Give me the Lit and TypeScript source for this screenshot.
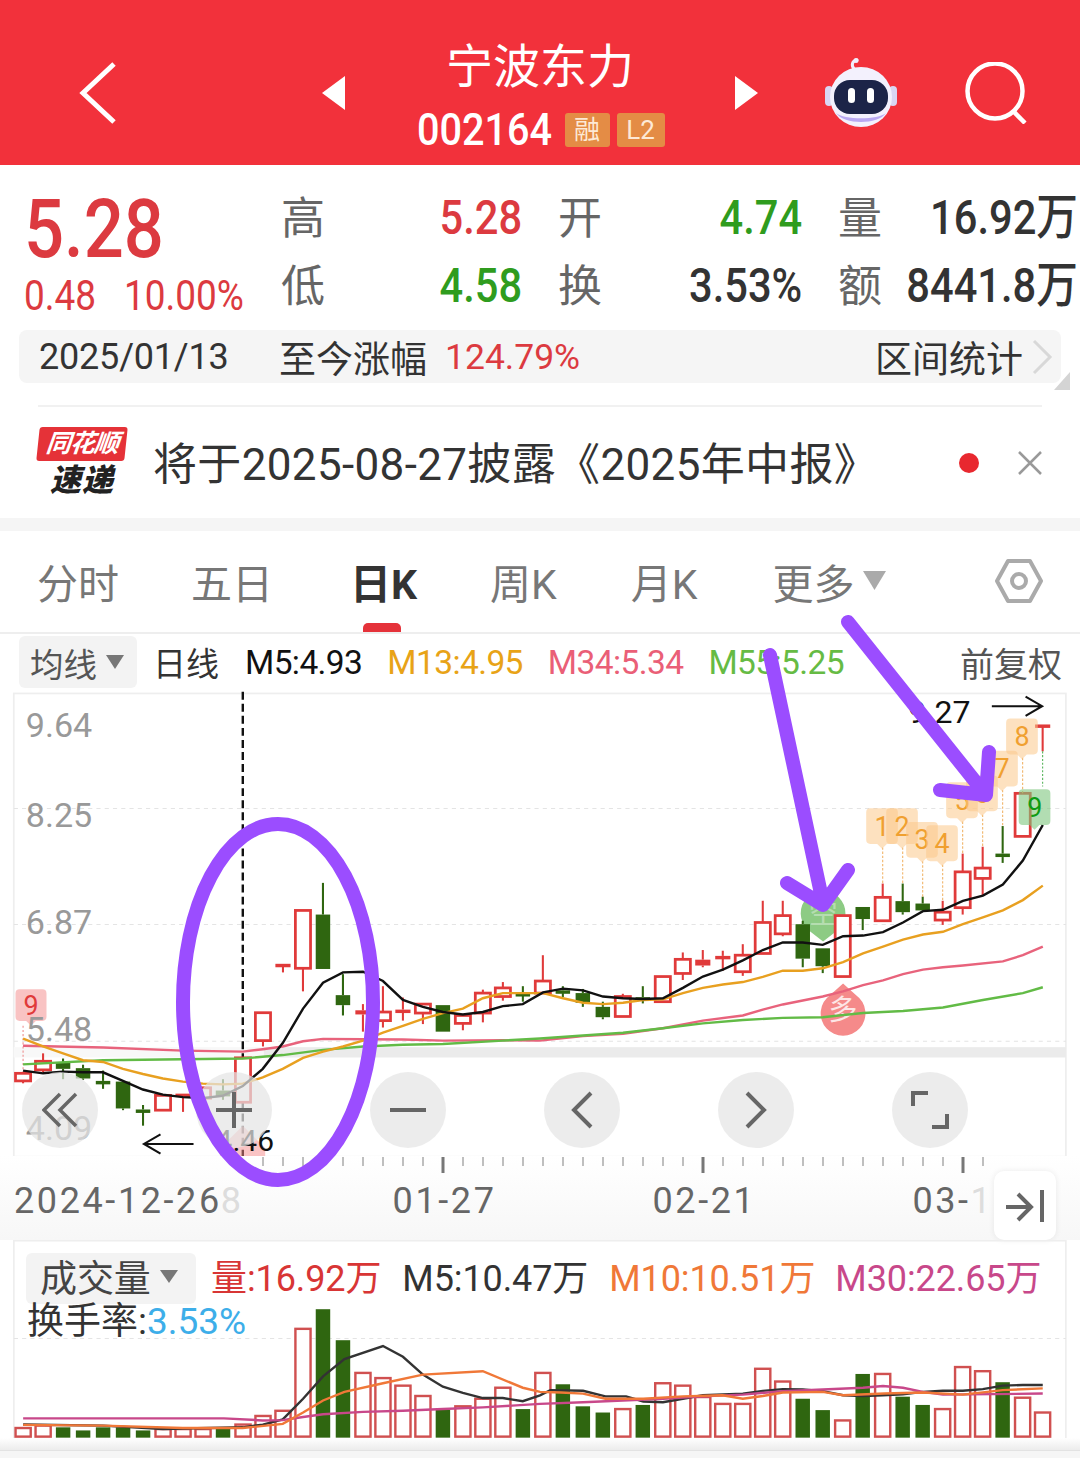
import { LitElement, css, html, svg } from 'lit'
import { customElement } from 'lit/decorators.js'

// chart data is traced off the screenshot: 1px = 2.904 units, x = 67 + 58.05 * i
const cx = (i: number) => 67 + 58.05 * i
const RED = '#e03a3a'
const GREEN = '#2f6610'

// kind, high, body top, body bottom, low
type Candle = [string, number, number, number, number]
const candles: Candle[] = [
  ['r', 1113, 1113, 1135, 1142], ['r', 1055, 1078, 1103, 1110], ['g', 1070, 1083, 1100, 1130], ['g', 1088, 1098, 1128, 1132],
  ['g', 1105, 1135, 1141, 1158], ['g', 1137, 1137, 1215, 1220], ['g', 1205, 1218, 1222, 1265], ['r', 1177, 1177, 1220, 1220],
  ['R', 1172, 1172, 1178, 1225], ['r', 1155, 1155, 1185, 1185], ['g', 1130, 1163, 1180, 1190], ['r', 1068, 1068, 1197, 1197],
  ['r', 937, 937, 1018, 1035], ['R', 795, 795, 800, 820], ['r', 640, 640, 808, 875], ['g', 560, 652, 810, 810],
  ['g', 825, 886, 915, 945], ['R', 912, 930, 942, 992], ['r', 860, 935, 960, 980], ['R', 893, 928, 934, 960],
  ['r', 912, 912, 938, 970], ['g', 915, 915, 992, 992], ['r', 945, 945, 968, 988], ['r', 870, 880, 938, 965],
  ['r', 848, 865, 890, 902], ['g', 860, 880, 884, 905], ['r', 770, 845, 880, 880], ['g', 860, 872, 880, 892],
  ['g', 868, 880, 908, 920], ['g', 905, 920, 950, 956], ['r', 882, 890, 948, 948], ['g', 860, 892, 898, 910],
  ['r', 832, 832, 905, 905], ['r', 762, 782, 823, 842], ['R', 755, 783, 800, 805], ['R', 757, 772, 777, 815],
  ['r', 738, 770, 818, 830], ['r', 612, 675, 765, 765], ['r', 612, 655, 708, 715], ['g', 670, 680, 780, 805],
  ['g', 750, 750, 802, 822], ['r', 655, 655, 832, 832], ['g', 630, 630, 665, 697], ['r', 562, 602, 670, 670],
  ['g', 562, 613, 645, 652], ['g', 600, 620, 640, 640], ['r', 612, 645, 668, 682], ['r', 475, 528, 632, 652],
  ['r', 455, 517, 547, 595], ['g', 395, 475, 485, 502], ['r', 300, 300, 425, 425], ['R', 100, 100, 105, 178],
]

const left = 1568
const pts = (head: number[][], tail: number[][]) =>
  [...head, ...tail.map(([x, y]) => [x + left, y])].map(p => p.join(',')).join(' ')

const ma5 = pts(
  [[67, 1105], [125, 1113], [183, 1108], [241, 1110], [299, 1110], [357, 1135], [415, 1160], [473, 1175], [531, 1182], [589, 1185], [647, 1178], [705, 1150], [763, 1100], [821, 1025], [880, 925], [938, 850], [996, 820], [1054, 818], [1112, 845], [1170, 900], [1228, 920], [1286, 935], [1344, 942], [1402, 935], [1460, 918], [1518, 912]],
  [[9, 878], [67, 867], [125, 872], [183, 890], [241, 895], [299, 897], [357, 895], [415, 865], [473, 832], [531, 812], [589, 785], [647, 755], [705, 733], [763, 733], [821, 740], [880, 715], [938, 713], [996, 703], [1054, 675], [1112, 642], [1170, 638], [1228, 612], [1286, 597], [1344, 565], [1402, 495], [1460, 392]],
)
const ma13 = pts(
  [[67, 1012], [125, 1035], [183, 1055], [241, 1075], [299, 1080], [357, 1100], [415, 1115], [473, 1128], [531, 1137], [589, 1143], [647, 1145], [705, 1143], [763, 1125], [821, 1100], [880, 1068], [938, 1050], [996, 1035], [1054, 1018], [1112, 995], [1170, 975], [1228, 955], [1286, 938], [1344, 925], [1402, 895], [1460, 880], [1518, 880]],
  [[9, 880], [67, 895], [125, 908], [183, 912], [241, 908], [299, 900], [357, 898], [415, 880], [473, 865], [531, 855], [589, 848], [647, 833], [705, 815], [763, 815], [821, 808], [880, 790], [938, 765], [996, 745], [1054, 725], [1112, 710], [1170, 702], [1228, 680], [1286, 660], [1344, 640], [1402, 610], [1460, 568]],
)
const ma34 = pts(
  [[67, 1033], [300, 1038], [531, 1047], [705, 1050], [763, 1043], [821, 1035], [880, 1020], [938, 1013], [1054, 1014], [1170, 1015], [1286, 1018], [1460, 1017]],
  [[0, 1018], [125, 1005], [241, 998], [357, 982], [473, 960], [589, 945], [647, 928], [705, 913], [821, 890], [880, 875], [938, 857], [996, 843], [1054, 825], [1112, 812], [1170, 805], [1228, 800], [1344, 788], [1402, 770], [1460, 745]],
)
const ma55 = pts(
  [[67, 1087], [299, 1075], [473, 1073], [705, 1070], [821, 1060], [938, 1045], [1054, 1035], [1170, 1030], [1286, 1028], [1460, 1018]],
  [[0, 1012], [125, 1003], [241, 995], [357, 982], [473, 968], [589, 958], [705, 952], [821, 950], [938, 938], [1054, 932], [1170, 922], [1286, 900], [1402, 880], [1460, 863]],
)

// top of each volume bar, baseline 603
const volTops = [575, 568, 573, 582, 573, 573, 582, 578, 578, 578, 575, 565, 540, 525, 287, 230, 320, 415, 430, 452, 482, 522, 512, 490, 458, 520, 415, 448, 512, 530, 520, 508, 445, 452, 485, 505, 505, 403, 440, 490, 523, 553, 418, 418, 484, 508, 520, 398, 410, 442, 487, 530]

const volBlack = pts(
  [[67, 565], [299, 568], [473, 578], [705, 573], [763, 565], [821, 550], [880, 490], [938, 425], [1000, 375], [1112, 337], [1170, 368], [1228, 420], [1286, 455], [1344, 473], [1402, 488], [1460, 488], [1518, 497]],
  [[0, 480], [30, 465], [125, 467], [190, 483], [250, 483], [300, 498], [357, 500], [415, 490], [473, 480], [589, 475], [647, 467], [705, 462], [763, 463], [821, 468], [880, 480], [938, 482], [996, 480], [1054, 477], [1112, 470], [1170, 467], [1228, 467], [1286, 462], [1344, 452], [1402, 450], [1460, 450]],
)
const volOrange = pts(
  [[67, 566], [299, 568], [531, 575], [705, 575], [821, 563], [880, 530], [938, 495], [1000, 470], [1112, 445], [1228, 420], [1402, 410], [1518, 458]],
  [[0, 470], [60, 472], [125, 475], [190, 490], [300, 490], [415, 483], [530, 480], [589, 490], [647, 482], [705, 472], [821, 470], [880, 480], [1000, 475], [1112, 472], [1228, 478], [1344, 465], [1460, 460]],
)
const volPink = pts(
  [[67, 547], [650, 547], [763, 553], [821, 552], [880, 543], [938, 535], [1054, 528], [1170, 525], [1286, 520], [1402, 515]],
  [[0, 505], [125, 500], [241, 495], [357, 490], [473, 483], [589, 478], [705, 468], [821, 463], [938, 458], [996, 453], [1054, 458], [1112, 470], [1170, 478], [1460, 475]],
)

// orange sequence flags: number, x, flag centre y, y the dashed line runs to
const flags: [string, number, number, number][] = [
  ['1', 43, 395, 562], ['2', 44, 395, 562], ['3', 45, 435, 600], ['4', 46, 445, 612],
  ['5', 47, 320, 475], ['6', 48, 300, 455], ['7', 49, 228, 395], ['8', 50, 135, 300],
]

const flagPath = (x: number, y: number, w = 92, h = 104) =>
  `M${x - w / 2 + 12} ${y - h / 2}h${w - 24}q12 0 12 12v${h - 24}q0 12 -12 12h${-(w / 2 - 26)}l-14 14l-14 -14h${-(w / 2 - 26)}q-12 0 -12 -12v${-(h - 24)}q0 -12 12 -12z`

const candleSvg = ([kind, high, top, bottom, low]: Candle, i: number) => {
  const x = cx(i)
  const c = kind === 'g' ? GREEN : RED
  const w = kind === 'g' ? 42 : 44
  return svg`
    <line x1=${x} x2=${x} y1=${high} y2=${top} stroke=${c} stroke-width="6" />
    <line x1=${x} x2=${x} y1=${bottom} y2=${low} stroke=${c} stroke-width="6" />
    ${kind === 'r'
      ? svg`<rect x=${x - w / 2} y=${top} width=${w} height=${bottom - top} fill="#fff" stroke=${c} stroke-width="8" />`
      : svg`<rect x=${x - w / 2} y=${top} width=${w} height=${Math.max(bottom - top, 10)} fill=${c} />`}`
}

const volBar = (top: number, i: number) => {
  const x = cx(i)
  const green = candles[i][0] === 'g'
  return green
    ? svg`<rect x=${x - 21} y=${top} width="42" height=${603 - top} fill=${GREEN} />`
    : svg`<rect x=${x - 22} y=${top} width="44" height=${600 - top} fill="#fff" stroke="#d05050" stroke-width="7" />`
}

@customElement('app-root')
export class AppRoot extends LitElement {
  static styles = css`
    :host {
      display: block;
      position: relative;
      width: 1080px;
      height: 1462px;
      overflow: hidden;
      background: #fff;
      font-family: Roboto, "Noto Sans CJK SC", sans-serif;
      color: #333;
    }
    svg { display: block; }
    .cond { display: inline-block; transform: scaleX(.86); transform-origin: left center; white-space: nowrap; }

    .head {
      height: 165px;
      box-sizing: border-box;
      padding-top: 20px;
      background: #f2313b;
      color: #fff;
      display: grid;
      grid-template-columns: 322px 23px 390px 23px 67px 72px 68px 62px;
      align-items: center;
    }
    .back { margin-left: 78px; }
    .title { text-align: center; }
    .name { font-size: 47px; line-height: 56px; margin-top: 4px; }
    .code { display: flex; justify-content: center; align-items: center; gap: 7px; height: 40px; margin-top: 15px; padding-left: 1px; }
    .num { font-size: 44px; font-weight: 500; width: 141px; text-align: left; }
    .num .cond { transform: scaleX(.9); }
    .tag { background: #e48c45; color: #fde9d6; font-size: 26px; height: 34px; line-height: 34px; text-align: center; border-radius: 3px; }
    .tag.a { width: 45px; }
    .tag.b { width: 48px; }

    .quote { height: 165px; display: flex; }
    .price { width: 283px; padding-left: 24px; box-sizing: border-box; color: #dc3a40; }
    .big { font-size: 82px; line-height: 80px; margin-top: 24px; font-weight: 500; }
    .chg { display: flex; gap: 30px; font-size: 42px; line-height: 44px; margin-top: 5px; width: 256px; }
    .chg span { width: 70px; }
    .chg .cond { transform: scaleX(.88); }
    .grid {
      display: grid;
      grid-template-columns: 42px 197px 80px 200px 80px 196px;
      grid-auto-rows: 68px;
      margin-top: 19px;
      align-items: center;
    }
    .lab { font-size: 44px; color: #666; justify-self: end; margin-top: -6px; }
    .val {
      font-size: 49px;
      line-height: 60px;
      font-weight: 500;
      justify-self: end;
      white-space: nowrap;
      transform: scaleX(.85);
      transform-origin: right center;
    }
    .up { color: #dc3a40; }
    .down { color: #2f9c1e; }

    .range {
      position: relative;
      height: 53px;
      margin: 0 19px;
      padding: 0 8px 0 20px;
      background: #f5f5f5;
      border-radius: 8px;
      display: flex;
      align-items: center;
      font-size: 36px;
    }
    .range .date { width: 240px; letter-spacing: -.2px; }
    .range .cn { font-size: 37px; }
    .range .pct { margin-left: 18px; font-size: 35.5px; }
    .range .stat { margin-left: auto; font-size: 37px; display: flex; align-items: center; gap: 9px; }
    .corner { position: absolute; right: -9px; bottom: -7px; }

    .news {
      margin: 22px 38px 0;
      height: 111px;
      border-top: 2px solid #f1f1f1;
      display: flex;
      align-items: center;
    }
    .logo { width: 88px; margin-top: 2px; }
    .logo .top {
      background: #e53238;
      color: #fff;
      height: 34px;
      line-height: 34px;
      font-size: 25px;
      font-weight: 700;
      font-style: italic;
      text-align: center;
      border-radius: 3px;
      transform: skewX(-6deg);
      white-space: nowrap;
      letter-spacing: -1px;
    }
    .logo .bot { font-size: 31px; line-height: 40px; font-weight: 900; font-style: italic; color: #222; text-align: center; letter-spacing: 1px; }
    .msg { font-size: 44px; margin-left: 27px; margin-top: -3px; letter-spacing: .35px; white-space: nowrap; }
    .dot { width: 20px; height: 20px; border-radius: 50%; background: #e8282f; margin-left: auto; margin-right: 2px; }
    .close { margin-left: 36px; margin-right: -1px; }

    .gap { height: 13px; background: #f5f5f5; }

    .tabs {
      position: relative;
      height: 99px;
      border-bottom: 2px solid #eee;
      display: flex;
      align-items: center;
      font-size: 41px;
      color: #777;
      padding-left: 37px;
      padding-bottom: 2px;
      box-sizing: content-box;
    }
    .tabs span { white-space: nowrap; }
    .tabs .on { color: #333; font-weight: 700; }
    .bar { position: absolute; left: 363px; bottom: 0; width: 38px; height: 9px; border-radius: 5px 5px 0 0; background: #e5323a; }
    .more { display: flex; align-items: center; gap: 8px; }

    .malegend {
      height: 56px;
      display: flex;
      align-items: center;
      font-size: 33px;
      white-space: nowrap;
    }
    .pick {
      margin-left: 19px;
      width: 118px;
      height: 52px;
      background: #f3f3f3;
      border-radius: 6px;
      display: flex;
      align-items: center;
      gap: 9px;
      padding-left: 11px;
      box-sizing: border-box;
      color: #555;
      font-size: 33.5px;
    }
    .ma { letter-spacing: -.6px; font-size: 33.5px; }

    .chart { position: relative; height: 466px; }
    .tools {
      position: absolute;
      left: 22px;
      top: 382px;
      display: flex;
      gap: 98px;
    }
    .tool {
      width: 76px;
      height: 76px;
      border-radius: 50%;
      background: rgba(228, 228, 228, .72);
      display: flex;
      align-items: center;
      justify-content: center;
    }

    .dates {
      position: relative;
      height: 84px;
      background: linear-gradient(#fff, #f7f7f7);
      font-size: 36px;
      color: #666;
    }
    .dates .row { display: flex; padding-left: 14px; margin-top: 3px; letter-spacing: 2.6px; line-height: 44px; white-space: nowrap; }
    .dates .fade { color: #ddd; }
    .jump {
      position: absolute;
      left: 994px;
      top: 15px;
      width: 62px;
      height: 69px;
      background: #fff;
      border-radius: 10px;
      box-shadow: 0 0 6px rgba(0, 0, 0, .08);
      display: flex;
      align-items: center;
      justify-content: center;
    }

    .vol { position: relative; height: 198px; }
    .legend {
      position: absolute;
      left: 26px;
      top: 13px;
      display: flex;
      align-items: center;
      font-size: 36px;
      white-space: nowrap;
      letter-spacing: -.1px;
    }
    .pick2 {
      width: 170px;
      height: 51px;
      background: #f3f3f3;
      border-radius: 6px;
      display: flex;
      align-items: center;
      gap: 9px;
      padding: 0 0 5px 14px;
      box-sizing: border-box;
      font-size: 37px;
      color: #444;
    }
    .legend span { margin-left: 15px; margin-top: -8px; }
    .turn { position: absolute; left: 27px; top: 51px; font-size: 37px; white-space: nowrap; }
    .turn b { font-weight: 400; color: #3daee9; }
    .foot1 { height: 12px; background: linear-gradient(#fff, #ececec); }
    .foot2 { height: 7px; background: #f6f6f6; border-top: 1px solid #e3e3e3; }

    .marks { position: absolute; left: 0; top: 0; pointer-events: none; }
  `

  render() {
    return html`
      <div class="head">
        <svg class="back" width="40" height="64" viewBox="0 0 40 64"><path d="M36 3L5 32l31 29" fill="none" stroke="#fff" stroke-width="5" /></svg>
        <svg width="23" height="34" viewBox="0 0 23 34"><path d="M23 0v34L0 17z" fill="#fff" /></svg>
        <div class="title">
          <div class="name">宁波东力</div>
          <div class="code">
            <span class="num"><span class="cond">002164</span></span>
            <div class="tag a">融</div>
            <div class="tag b">L2</div>
          </div>
        </div>
        <svg width="23" height="34" viewBox="0 0 23 34"><path d="M0 0v34L23 17z" fill="#fff" /></svg>
        <span></span>
        <svg width="72" height="70" viewBox="0 0 72 70">
          <path d="M29 11c-3-4-2-8 3-9" fill="none" stroke="#f1eefc" stroke-width="3" stroke-linecap="round" />
          <circle cx="31" cy="2.500" r="2.500" fill="#f1eefc" />
          <rect x="0" y="28" width="8" height="20" rx="4" fill="#d9d6f3" />
          <rect x="64" y="28" width="8" height="20" rx="4" fill="#d9d6f3" />
          <ellipse cx="36" cy="39" rx="31" ry="30" fill="#f3f1fd" />
          <path d="M11 55c8 12 42 12 50 0c-8 7-42 7-50 0z" fill="#b9a8f2" />
          <rect x="9" y="22" width="54" height="34" rx="16" fill="#1c2448" />
          <rect x="23" y="30" width="7" height="15" rx="3.500" fill="#fff" />
          <rect x="42" y="30" width="7" height="15" rx="3.500" fill="#fff" />
        </svg>
        <span></span>
        <svg width="62" height="62" viewBox="0 0 62 62">
          <circle cx="30" cy="29" r="27.500" fill="none" stroke="#fff" stroke-width="4.500" />
          <path d="M48 49l12 12" stroke="#fff" stroke-width="4.500" />
        </svg>
      </div>

      <div class="quote">
        <div class="price">
          <div class="big"><span class="cond">5.28</span></div>
          <div class="chg"><span><span class="cond">0.48</span></span><span><span class="cond">10.00%</span></span></div>
        </div>
        <div class="grid">
          <div class="lab">高</div><div class="val up">5.28</div>
          <div class="lab">开</div><div class="val down">4.74</div>
          <div class="lab">量</div><div class="val">16.92万</div>
          <div class="lab">低</div><div class="val down">4.58</div>
          <div class="lab">换</div><div class="val">3.53%</div>
          <div class="lab">额</div><div class="val">8441.8万</div>
        </div>
      </div>

      <div class="range">
        <span class="date">2025/01/13</span>
        <span class="cn">至今涨幅</span>
        <span class="pct up">124.79%</span>
        <span class="stat">区间统计
          <svg width="21" height="36" viewBox="0 0 21 36"><path d="M2 2l16 16L2 34" fill="none" stroke="#d8d8d8" stroke-width="3" /></svg>
        </span>
        <svg class="corner" width="16" height="18" viewBox="0 0 16 18"><path d="M16 0v18H0z" fill="#d4d4d4" /></svg>
      </div>

      <div class="news">
        <div class="logo">
          <div class="top">同花顺</div>
          <div class="bot">速递</div>
        </div>
        <div class="msg">将于2025-08-27披露《2025年中报》</div>
        <div class="dot"></div>
        <svg class="close" width="26" height="26" viewBox="0 0 26 26"><path d="M2 2l22 22M24 2L2 24" stroke="#999" stroke-width="2.500" /></svg>
      </div>

      <div class="gap"></div>

      <div class="tabs">
        <span>分时</span>
        <span style="margin-left:72px">五日</span>
        <span class="on" style="margin-left:77px">日K</span>
        <span style="margin-left:73px">周K</span>
        <span style="margin-left:74px">月K</span>
        <span class="more" style="margin-left:75px">更多
          <svg width="23" height="19" viewBox="0 0 23 19"><path d="M0 0h23L11.500 19z" fill="#aaa" /></svg>
        </span>
        <svg style="margin-left:109px" width="48" height="46" viewBox="0 0 48 46">
          <path d="M13 3h22l11 20l-11 20H13L2 23z" fill="none" stroke="#aaa" stroke-width="4" stroke-linejoin="round" />
          <circle cx="24" cy="23" r="7" fill="none" stroke="#aaa" stroke-width="4" />
        </svg>
        <div class="bar"></div>
      </div>

      <div class="malegend">
        <div class="pick">均线
          <svg width="18" height="14" viewBox="0 0 18 14"><path d="M0 0h18L9 14z" fill="#777" /></svg>
        </div>
        <span style="margin-left:16px;color:#333">日线</span>
        <span class="ma" style="margin-left:26px;color:#111">M5:4.93</span>
        <span class="ma" style="margin-left:25px;color:#e8a317">M13:4.95</span>
        <span class="ma" style="margin-left:25px;color:#ea5f77">M34:5.34</span>
        <span class="ma" style="margin-left:25px;color:#66bb44">M55:5.25</span>
        <span style="margin-left:116px;color:#555;font-size:34px">前复权</span>
      </div>

      <div class="chart">
        <svg width="1080" height="466" viewBox="0 0 3136 1353">
          <rect x="40" y="10" width="3055" height="1345" fill="none" stroke="#eee" stroke-width="5" />
          <g stroke="#e4e4e4" stroke-width="3" stroke-dasharray="12 12">
            <line x1="40" x2="3095" y1="344" y2="344" />
            <line x1="40" x2="3095" y1="681" y2="681" />
            <line x1="40" x2="3095" y1="1020" y2="1020" />
          </g>
          <rect x="765" y="1037" width="2330" height="30" fill="#ebebeb" />
          <rect x="40" y="1037" width="725" height="30" fill="#f8f8f8" />
          <g font-size="99" fill="#999">
            <text x="75" y="135">9.64</text>
            <text x="75" y="397">8.25</text>
            <text x="75" y="708">6.87</text>
            <text x="75" y="1307">4.09</text>
          </g>
          <line x1="705" x2="705" y1="5" y2="1353" stroke="#111" stroke-width="7" stroke-dasharray="23 12" />

          <path d=${flagPath(90, 915, 90, 92)} fill="#f9c3c3" />
          <line x1="67" x2="67" y1="975" y2="1110" stroke="#e88" stroke-width="3" stroke-dasharray="6 6" />
          <text x="90" y="945" font-size="78" text-anchor="middle" fill="#e03a3a">9</text>
          <text x="75" y="1018" font-size="99" fill="#999">5.48</text>

          <path d=${`M${left + 822} 730l-44 -34a65 65 0 1 1 88 0z`} fill="#8dcb84" />
          <text x=${left + 822} y="680" font-size="84" text-anchor="middle" fill="#b5ddb0">空</text>
          <path d=${`M${left + 880} 852l38 34a65 65 0 1 1 -76 0z`} fill="#f58a8a" />
          <text x=${left + 880} y="958" font-size="84" text-anchor="middle" fill="#fde6e6">多</text>

          ${candles.map(candleSvg)}

          <polyline points=${ma34} fill="none" stroke="#e8637c" stroke-width="7" />
          <polyline points=${ma55} fill="none" stroke="#62bb46" stroke-width="7" />
          <polyline points=${ma13} fill="none" stroke="#e8a020" stroke-width="7" />
          <polyline points=${ma5} fill="none" stroke="#111" stroke-width="7" />

          ${flags.map(([n, i, y, to]) => svg`
            <line x1=${cx(i)} x2=${cx(i)} y1=${y + 62} y2=${to} stroke="#f0b060" stroke-width="3" stroke-dasharray="7 5" />
            <path d=${flagPath(cx(i) - 2, y)} fill="#fbc98a" fill-opacity=".55" />
            <text x=${cx(i) - 2} y=${y + 28} font-size="78" text-anchor="middle" fill="#f0a030">${n}</text>`)}

          <line x1=${cx(51)} x2=${cx(51)} y1="178" y2="280" stroke="#4caf50" stroke-width="3" stroke-dasharray="6 5" />
          <path d=${flagPath(left + 1436, 340, 92, 104)} fill="#7fc77f" fill-opacity=".6" />
          <text x=${left + 1437} y="368" font-size="78" text-anchor="middle" fill="#0f9b12">9</text>

          <path d="M640 1330L705 1265L770 1330V1355H640z" fill="#f58a8a" fill-opacity=".5" />
          <text x="626" y="1340" font-size="87" fill="#111">4.46</text>
          <path d="M562 1318H418m48-28l-48 28l48 28" fill="none" stroke="#111" stroke-width="6" />
          <text x="2637" y="97" font-size="93" fill="#111">9.27</text>
          <path d="M2880 47h146m-48-28l48 28l-48 28" fill="none" stroke="#111" stroke-width="6" />
        </svg>

        <div class="tools">
          <div class="tool"><svg width="36" height="36" viewBox="0 0 36 36"><path d="M18 2L2 18l16 16M34 2L18 18l16 16" fill="none" stroke="#666" stroke-width="3.500" /></svg></div>
          <div class="tool"><svg width="36" height="36" viewBox="0 0 36 36"><path d="M0 18h36M18 0v36" stroke="#666" stroke-width="4" /></svg></div>
          <div class="tool"><svg width="36" height="6" viewBox="0 0 36 6"><path d="M0 3h36" stroke="#666" stroke-width="4" /></svg></div>
          <div class="tool"><svg width="22" height="38" viewBox="0 0 22 38"><path d="M20 2L3 19l17 17" fill="none" stroke="#666" stroke-width="4" /></svg></div>
          <div class="tool"><svg width="22" height="38" viewBox="0 0 22 38"><path d="M2 2l17 17L2 36" fill="none" stroke="#666" stroke-width="4" /></svg></div>
          <div class="tool"><svg width="38" height="38" viewBox="0 0 38 38"><path d="M2 15V2h15M36 23v13H21" fill="none" stroke="#666" stroke-width="4" /></svg></div>
        </div>
      </div>

      <div class="dates">
        <svg width="1080" height="20" viewBox="0 0 1080 20">
          ${Array.from({ length: 37 }, (_, k) => {
            const x = 263 + 20 * k
            const major = x === 443 || x === 703 || x === 963
            return svg`<line x1=${x} x2=${x} y1="1" y2=${major ? 17 : 10} stroke=${major ? '#777' : '#aaa'} stroke-width=${major ? 3 : 1.5} />`
          })}
        </svg>
        <div class="row">
          <span>2024-12-26</span><span class="fade" style="margin-left:-1px">8</span>
          <span style="margin-left:149px">01-27</span>
          <span style="margin-left:156px">02-21</span>
          <span style="margin-left:156px">03-<span class="fade">1</span></span>
        </div>
        <div class="jump">
          <svg width="40" height="36" viewBox="0 0 40 36"><path d="M1 19h25m-13-13l13 13l-13 13M37 2v32" fill="none" stroke="#666" stroke-width="4" /></svg>
        </div>
      </div>

      <div class="vol">
        <svg width="1080" height="198" viewBox="0 29 3136 575">
          <path d="M40 610V31H3095V610" fill="none" stroke="#eee" stroke-width="5" />
          <line x1="40" x2="3095" y1="315" y2="315" stroke="#e4e4e4" stroke-width="3" stroke-dasharray="12 12" />
          ${volTops.map(volBar)}
          <polyline points=${volBlack} fill="none" stroke="#333" stroke-width="7" />
          <polyline points=${volPink} fill="none" stroke="#c8488a" stroke-width="7" />
          <polyline points=${volOrange} fill="none" stroke="#f07838" stroke-width="7" />
        </svg>
        <div class="legend">
          <div class="pick2">成交量
            <svg width="18" height="13" viewBox="0 0 18 13"><path d="M0 0h18L9 13z" fill="#777" /></svg>
          </div>
          <span style="color:#d83535">量:16.92万</span>
          <span style="margin-left:21px;color:#333">M5:10.47万</span>
          <span style="margin-left:21px;color:#f07838">M10:10.51万</span>
          <span style="margin-left:20px;color:#c8488a">M30:22.65万</span>
        </div>
        <div class="turn">换手率:<b>3.53%</b></div>
      </div>
      <div class="foot1"></div>
      <div class="foot2"></div>

      <svg class="marks" width="1080" height="1462" viewBox="0 0 1080 1462">
        <g fill="none" stroke="#9b4dff" stroke-linecap="round" stroke-linejoin="round">
          <ellipse cx="278" cy="1002" rx="95" ry="178" stroke-width="14" />
          <path d="M770 655L823 903M787 883L823 905L848 870" stroke-width="14" />
          <path d="M848 622L986 795M940 790L986 795L989 752" stroke-width="14" />
        </g>
      </svg>
    `
  }
}
